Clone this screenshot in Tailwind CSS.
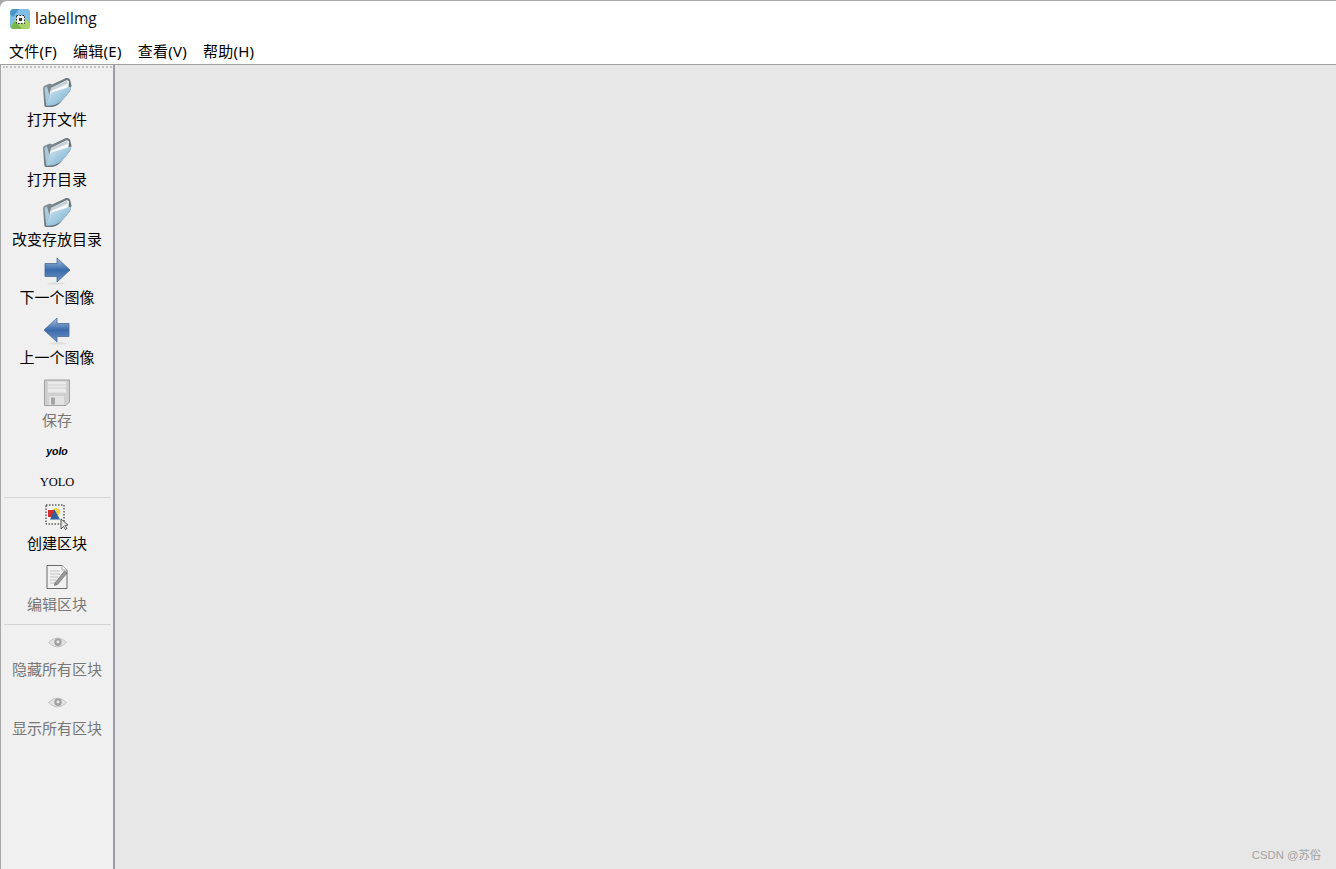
<!DOCTYPE html>
<html lang="zh">
<head>
<meta charset="utf-8">
<title>labelImg</title>
<script src="https://cdn.jsdelivr.net/npm/@tailwindcss/browser@4"></script>
</head>
<body class="w-[1336px] h-[869px] overflow-hidden bg-[#a9a9a9] font-['Noto_Sans','Noto_Sans_CJK_SC',sans-serif]">
<svg width="0" height="0" class="absolute">
  <defs>
    <linearGradient id="fb" x1="0" y1="0" x2="1" y2="1"><stop offset="0" stop-color="#dcebf2"/><stop offset=".5" stop-color="#a4cbe0"/><stop offset="1" stop-color="#6fa5c3"/></linearGradient>
    <linearGradient id="fg" x1="0" y1="0" x2="1" y2="1"><stop offset="0" stop-color="#8f9ba2"/><stop offset="1" stop-color="#444e55"/></linearGradient>
    <linearGradient id="ar" x1="0" y1="0" x2="0" y2="1"><stop offset="0" stop-color="#a9c3e2"/><stop offset=".5" stop-color="#3a6aac"/><stop offset="1" stop-color="#6f97c8"/></linearGradient>
    <symbol id="folder" viewBox="0 0 30 30">
      <path d="M1 11 Q1 9 3 8.500 L8 6.500 L10 7.500 L24 1 Q27 .5 28 2.500 L29.500 9 L28 14 L18 26 Q14 29.800 8 30 L4 30 Q2.500 30 2.300 28 Z" fill="url(#fg)"/>
      <path d="M6 25 L9 11 L25 3 L27 4.500 L26.500 11 L14 23 Z" fill="#f7f8f8"/>
      <path d="M9 11 L25 3.500 L26 6.500 L9 14 Z" fill="#c6d2d8"/>
      <path d="M4 28.500 Q6 19 9.500 15.500 L29 9.500 Q29.800 10 28.500 12.500 Q24 21 17 26 Q12 29.500 4 28.500Z" fill="url(#fb)"/>
      <path d="M2.500 10.500 L5 9.500 L7.500 18 L4 28Z" fill="#a9cbdc"/>
    </symbol>
    <symbol id="eye" viewBox="0 0 19 11">
      <path d="M.5 5.500 Q9.500 -3.500 18.500 5.500 Q9.500 14.500 .5 5.500Z" fill="#e4e4e4" stroke="#b4b4b4" stroke-width=".7"/>
      <circle cx="10" cy="5.300" r="3.700" fill="#a0a0a0"/>
      <circle cx="10" cy="4.800" r="1.500" fill="#e8e8e8"/>
    </symbol>
  </defs>
</svg>
<div class="w-full h-full bg-white rounded-tl-[7px] mt-px flex flex-col">
  <header class="h-[39px] shrink-0 flex items-center pl-[10px] pb-[3px] gap-[5px]">
    <svg width="20" height="20" viewBox="0 0 20 20" class="shrink-0">
      <rect x="0" y="0" width="20" height="20" rx="3" fill="#7dbde6"/>
      <path d="M0 5 Q0 0 5 0 L9 0 L3 8Z" fill="#4a93c6"/>
      <path d="M1 17 L7 8 L12 13 L15 9 L20 14 L20 17 Q20 20 17 20 L3 20 Q1 20 1 17Z" fill="#a9d46c"/>
      <path d="M1 17 L5 12 L12 20 L3 20 Q1 20 1 17Z" fill="#79b64c"/>
      <rect x="6.500" y="6.500" width="8" height="8" fill="#f7f7f7"/>
      <path d="M6.500 6.500h8v8h-8z" fill="none" stroke="#222" stroke-dasharray="1.500 1.500"/>
      <rect x="9" y="9" width="3" height="3" fill="#333"/>
    </svg>
    <span class="text-[15.500px] leading-none text-[#111] font-['Open_Sans',sans-serif]">labelImg</span>
  </header>
  <nav class="h-[24px] shrink-0 flex items-center pl-[9px] pb-[2px] gap-[16px] text-[15px] leading-none tracking-[0.25px] text-black">
    <span>文件(F)</span><span>编辑(E)</span><span>查看(V)</span><span>帮助(H)</span>
  </nav>
  <div class="h-px shrink-0 bg-[#a0a0a0]"></div>
  <main class="flex-1 flex min-h-0">
    <aside class="w-[115px] shrink-0 bg-[#f0f0f0] border-l border-l-[#a6a6a6] border-r-2 border-r-[#9c9ca6] flex flex-col items-center text-[15px] leading-[20px] text-black">
      <div class="w-[109px] h-[2px] mt-px mb-[9px] border-t-2 border-dotted border-[#c4c4c4] shrink-0"></div>
      <svg width="30" height="30" class="shrink-0"><use href="#folder"/></svg>
      <span class="mt-[2px] h-[20px]">打开文件</span>
      <svg width="30" height="30" class="mt-[8px] shrink-0"><use href="#folder"/></svg>
      <span class="mt-[2px] h-[20px]">打开目录</span>
      <svg width="30" height="30" class="mt-[8px] shrink-0"><use href="#folder"/></svg>
      <span class="mt-[2px] h-[20px]">改变存放目录</span>
      <svg width="28" height="28" viewBox="0 0 28 28" class="mt-[8px] shrink-0"><path d="M2 6.500 L14 6.500 L14 1 L27 13 L14 25 L14 19.500 L2 19.500Z" fill="url(#ar)" stroke="#4a6a94" stroke-width=".8"/><ellipse cx="13" cy="26.500" rx="9" ry="1.200" fill="#000" fill-opacity=".08"/></svg>
      <span class="mt-[2px] h-[20px]">下一个图像</span>
      <svg width="28" height="28" viewBox="0 0 28 28" class="mt-[10px] shrink-0"><path d="M26 6.500 L14 6.500 L14 1 L1 13 L14 25 L14 19.500 L26 19.500Z" fill="url(#ar)" stroke="#4a6a94" stroke-width=".8"/><ellipse cx="15" cy="26.500" rx="9" ry="1.200" fill="#000" fill-opacity=".08"/></svg>
      <span class="mt-[2px] h-[20px]">上一个图像</span>
      <svg width="28" height="28" viewBox="0 0 28 28" class="mt-[12px] shrink-0">
        <path d="M1.500 1 L26.500 1 L26.500 23 L23 26.500 L1.500 26.500Z" fill="#cfcfcf" stroke="#a0a0a0"/>
        <rect x="5" y="2.500" width="18" height="11" fill="#ececec"/>
        <path d="M5 6h18M5 9h18" stroke="#cfcfcf"/>
        <rect x="6" y="17" width="15" height="9" fill="#e3e3e3"/>
        <rect x="8" y="18.500" width="4" height="7" fill="#a5a5a5"/>
      </svg>
      <span class="mt-[3px] h-[20px] text-[#777]">保存</span>
      <span class="mt-[11px] h-[20px] flex items-center font-['Liberation_Sans',sans-serif] font-bold italic text-[10.500px] leading-none">yolo</span>
      <span class="mt-[11px] h-[20px] font-['Liberation_Serif',serif] text-[12.500px]">YOLO</span>
      <div class="w-[107px] ml-px h-px bg-[#d4d4d4] mt-[5px] shrink-0"></div>
      <svg width="26" height="26" viewBox="0 0 26 26" class="mt-[6px] shrink-0">
        <rect x="2" y="1" width="18" height="19" fill="#f2f2ee" stroke="#111" stroke-dasharray="1.500 1.500"/>
        <circle cx="12" cy="8" r="4" fill="#f3d34a"/>
        <rect x="4" y="6" width="7" height="7" fill="#d62c2c"/>
        <path d="M10.500 5.500 L16 15.500 L6 15.500Z" fill="#2f5f9e"/>
        <path d="M17 15 L17 25 L19.500 22.500 L21.500 25.500 L23 24.500 L21 21.500 L24 21Z" fill="#e8e8e8" stroke="#333" stroke-width=".8"/>
      </svg>
      <span class="mt-[3px] h-[20px]">创建区块</span>
      <svg width="24" height="26" viewBox="0 0 24 26" class="mt-[11px] shrink-0">
        <path d="M2 1.500 L17 1.500 L22 6 L22 24.500 L2 24.500Z" fill="#f1f1f1" stroke="#6a6a6a"/>
        <path d="M17 1.500 L17 6 L22 6" fill="#fff" stroke="#a8a8a8"/>
        <path d="M5 7h10M5 10h10M5 13h8M5 16h6M5 19h5" stroke="#c2c2c2"/>
        <path d="M10 19 L19.500 7 L22 9 L12.500 20.500 L9.500 21.500Z" fill="#9a9a9a" stroke="#5c5c5c" stroke-width=".6"/>
      </svg>
      <span class="mt-[4px] h-[20px] text-[#777]">编辑区块</span>
      <div class="w-[107px] ml-px h-px bg-[#d4d4d4] mt-[10px] shrink-0"></div>
      <svg width="19" height="11" class="mt-[12px] shrink-0"><use href="#eye"/></svg>
      <span class="mt-[11px] h-[20px] text-[#777]">隐藏所有区块</span>
      <svg width="19" height="11" class="mt-[18px] shrink-0"><use href="#eye"/></svg>
      <span class="mt-[10px] h-[20px] text-[#777]">显示所有区块</span>
    </aside>
    <section class="flex-1 bg-[#e7e7e7] relative">
      <span class="absolute right-[15px] bottom-[9px] text-[11.300px] leading-none text-[#a3a3a3] font-['Liberation_Sans','Noto_Sans_CJK_SC',sans-serif]">CSDN @苏俗</span>
    </section>
  </main>
</div>
</body>
</html>
